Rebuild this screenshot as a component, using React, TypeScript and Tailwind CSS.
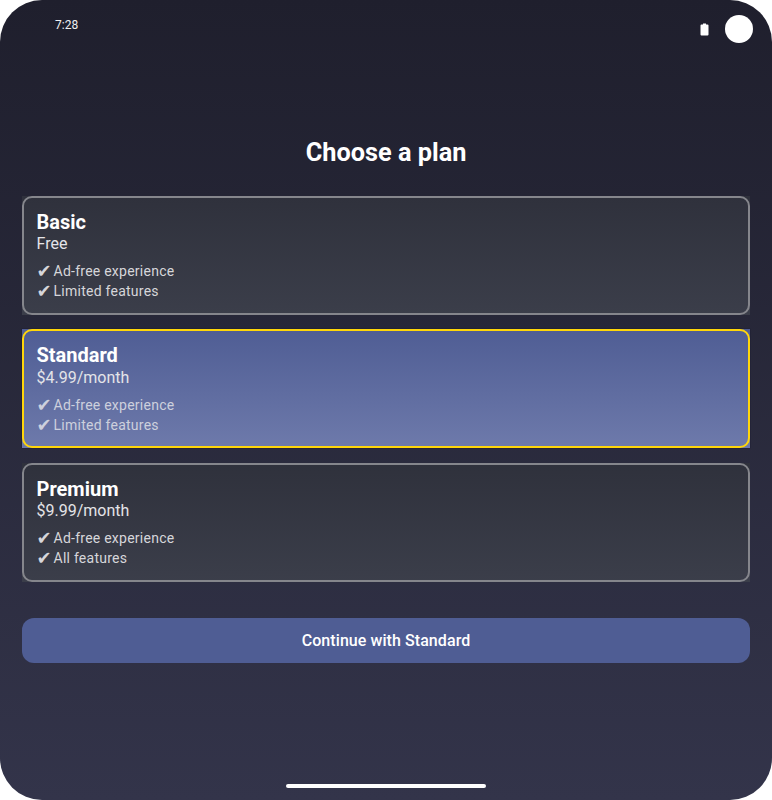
const plans = [
  { name: 'Basic', price: 'Free', features: ['Ad-free experience', 'Limited features'] },
  { name: 'Standard', price: '$4.99/month', features: ['Ad-free experience', 'Limited features'], selected: true },
  { name: 'Premium', price: '$9.99/month', features: ['Ad-free experience', 'All features'] },
];

function PlanCard({ plan }: { plan: (typeof plans)[number] }) {
  return (
    <div
      className={`h-[119px] ${
        plan.selected
          ? 'bg-gradient-to-b from-[#4f5d94] to-[#6e7aab] shadow-[0_0_1px_#10102a]'
          : 'bg-gradient-to-b from-[#2f313c] to-[#3b3e4a]'
      }`}
    >
      <div
        className={`h-full rounded-[10px] border-2 pl-[12.5px] pt-[12px] ${
          plan.selected ? 'border-[#ffd60a]' : 'border-[#85868c]'
        }`}
      >
        <div className="text-[20px] leading-[24px] font-bold text-white">{plan.name}</div>
        <div className="mt-[0.3px] text-[16px] leading-[19px] text-[#e4e4e8]">{plan.price}</div>
        <ul
          className={`mt-[8px] text-[14px] leading-[20px] tracking-[0.25px] ${
            plan.selected ? 'text-[#cdd0dd]' : 'text-[#d6d6da]'
          }`}
        >
          {plan.features.map((f) => (
            <li key={f} className="flex h-[20px] items-center">
              <span className="w-[17px] font-['DejaVu_Sans'] text-[18px] leading-[20px]">✔</span>
              {f}
            </li>
          ))}
        </ul>
      </div>
    </div>
  );
}

export default function App() {
  return (
    <div className="h-[800px] w-[772px] bg-white font-['Roboto',sans-serif]">
      <div className="relative flex h-full flex-col overflow-hidden rounded-[42px] bg-gradient-to-b from-[#1f1f2d] to-[#33344a] px-[22px]">
        <div className="flex h-[50px] items-start pl-[33px] pt-[17px]">
          <span className="text-[12px] leading-[16px] text-[#f0f0f0]">7:28</span>
          <div className="absolute right-[19px] top-[15px] flex items-center gap-[16px]">
            <svg width="9" height="13" viewBox="0 0 9 13" fill="white">
              <path d="M3 0.5h3v1h1.5a1 1 0 0 1 1 1v9a1 1 0 0 1-1 1h-6a1 1 0 0 1-1-1v-9a1 1 0 0 1 1-1h1.5z" />
            </svg>
            <div className="h-[28px] w-[28px] rounded-full bg-white" />
          </div>
        </div>

        <h1 className="mt-[88px] text-center text-[25.3px] leading-[30px] font-bold text-white">Choose a plan</h1>

        <div className="mt-[28px] flex flex-col gap-[14.4px]">
          {plans.map((plan) => (
            <PlanCard key={plan.name} plan={plan} />
          ))}
        </div>

        <button className="mt-[36px] h-[45px] rounded-[12px] bg-[#4f5d94] pt-[1px] text-[16px] font-medium tracking-[0.07px] text-white">
          Continue with Standard
        </button>

        <div className="absolute bottom-[12px] left-[286px] h-[4px] w-[200px] rounded-full bg-white" />
      </div>
    </div>
  );
}
